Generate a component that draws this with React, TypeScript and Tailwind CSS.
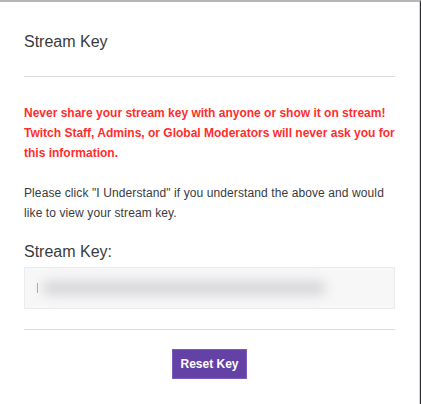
export default function App() {
  return (
    <div className="w-[421px] h-[404px] bg-white border-t-2 border-[#b4b4b9] border-r border-r-[#2f2f33] font-['Liberation_Sans',Arial,sans-serif] text-[#3a3a3d]">
      <div className="h-full border-r border-r-[#d2d2d6] px-[24px] pt-[30px]">
        <h2 className="text-[16px] leading-[20px]">Stream Key</h2>
        <div className="mt-[24px] h-px bg-[#dcdce0]" />

        <p className="mt-[26px] text-[12px] leading-[20px] font-bold text-[#ff2d2d]">
          Never share your stream key with anyone or show it on stream! Twitch Staff, Admins, or Global Moderators will never ask you for this information.
        </p>

        <p className="mt-[20px] text-[12px] leading-[20px] tracking-[0.1px]">
          Please click "I Understand" if you understand the above and would like to view your stream key.
        </p>

        <div className="mt-[19px] text-[16px] leading-[20px]">Stream Key:</div>
        <div className="mt-[5px] h-[42px] bg-[#f7f7f8] border border-[#ececee] flex items-center pl-[12px] overflow-hidden">
          <div className="w-px h-[10px] bg-[#a8a8ac]" />
          <div className="ml-[4px] w-[284px] h-[14px] rounded-full bg-[#d6d6d9] blur-[6px]" />
        </div>

        <div className="mt-[20px] h-px bg-[#dcdce0]" />

        <div className="mt-[19px] flex justify-center">
          <button className="w-[75px] h-[30px] bg-[#6441a5] border border-[#7d5bbe] text-white text-[12px] font-bold">
            Reset Key
          </button>
        </div>
      </div>
    </div>
  );
}
